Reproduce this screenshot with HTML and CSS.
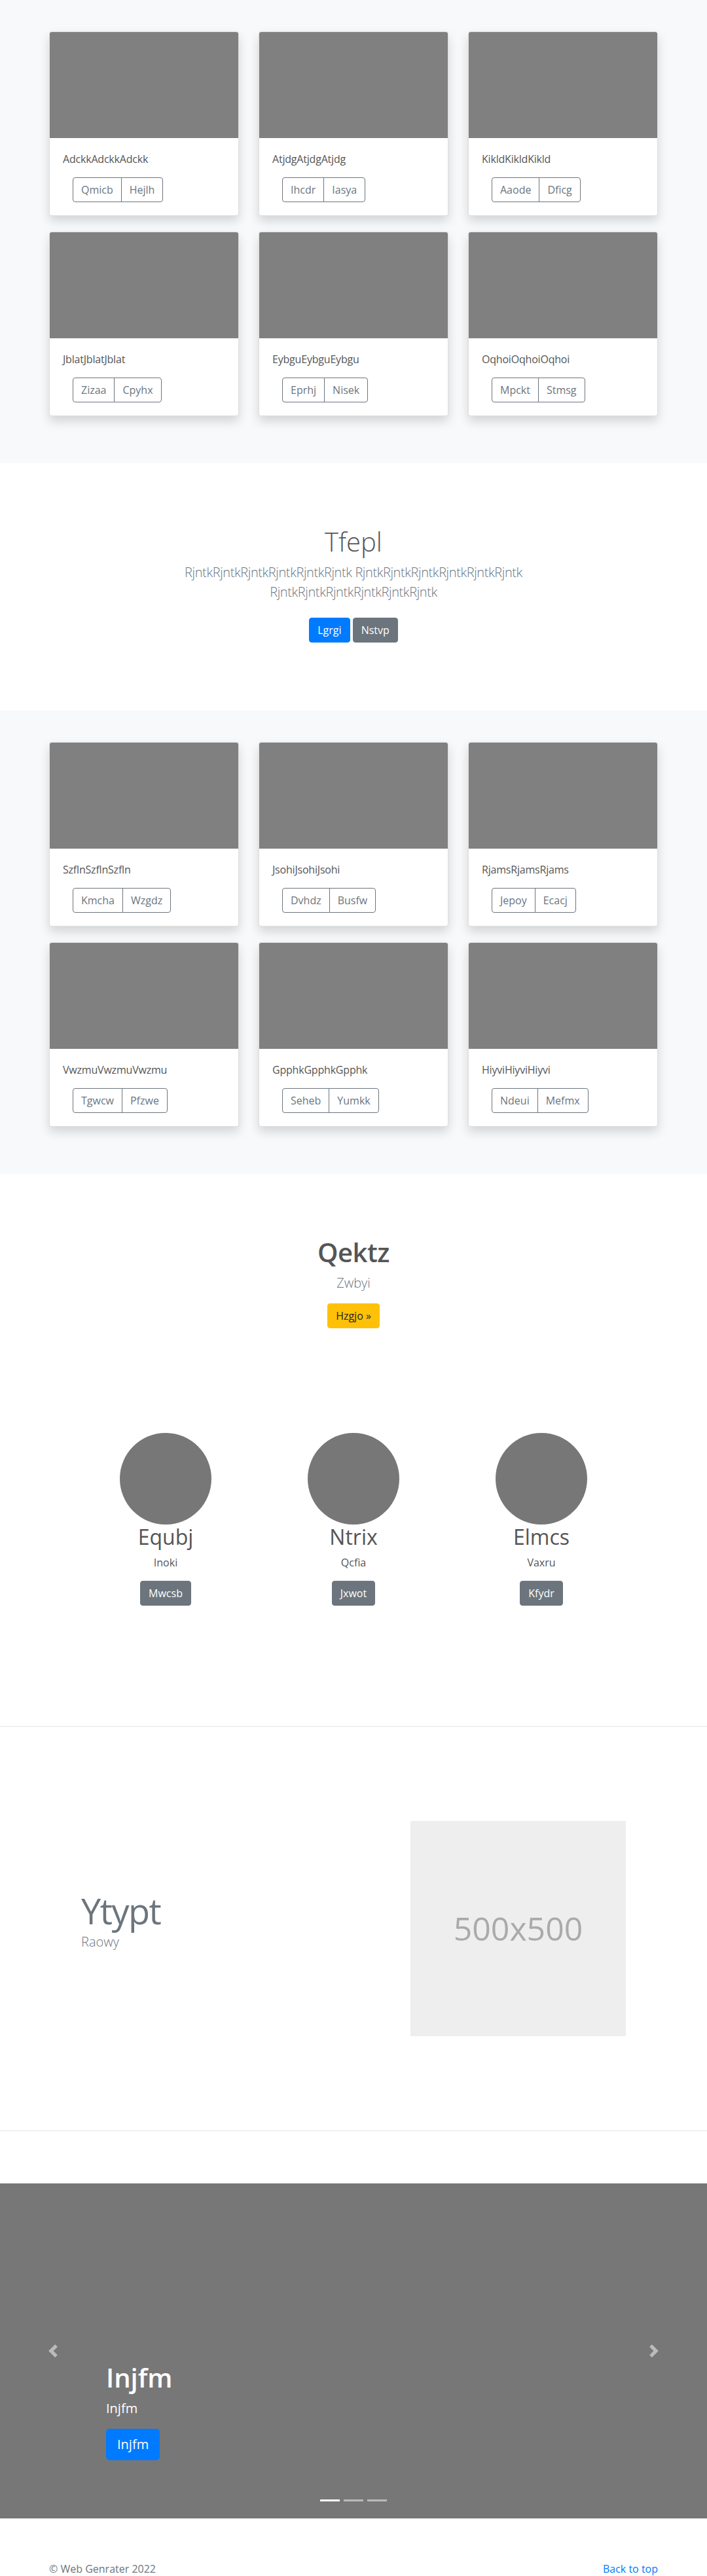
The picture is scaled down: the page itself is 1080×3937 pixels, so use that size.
FILE: index.html
```html
<!DOCTYPE html>
<html lang="en">
<head>
<meta charset="utf-8">
<title>Album</title>
<link rel="stylesheet" href="styles.css">
</head>
<body>

<section class="album">
  <div class="container grid">
    <div class="card"><div class="card-img"></div><div class="card-body"><p class="card-text">AdckkAdckkAdckk</p><div class="btn-group"><span class="btn-o">Qmicb</span><span class="btn-o">Hejlh</span></div></div></div>
    <div class="card"><div class="card-img"></div><div class="card-body"><p class="card-text">AtjdgAtjdgAtjdg</p><div class="btn-group"><span class="btn-o">Ihcdr</span><span class="btn-o">Iasya</span></div></div></div>
    <div class="card"><div class="card-img"></div><div class="card-body"><p class="card-text">KikldKikldKikld</p><div class="btn-group"><span class="btn-o">Aaode</span><span class="btn-o">Dficg</span></div></div></div>
    <div class="card"><div class="card-img"></div><div class="card-body"><p class="card-text">JblatJblatJblat</p><div class="btn-group"><span class="btn-o">Zizaa</span><span class="btn-o">Cpyhx</span></div></div></div>
    <div class="card"><div class="card-img"></div><div class="card-body"><p class="card-text">EybguEybguEybgu</p><div class="btn-group"><span class="btn-o">Eprhj</span><span class="btn-o">Nisek</span></div></div></div>
    <div class="card"><div class="card-img"></div><div class="card-body"><p class="card-text">OqhoiOqhoiOqhoi</p><div class="btn-group"><span class="btn-o">Mpckt</span><span class="btn-o">Stmsg</span></div></div></div>
  </div>
</section>

<section class="hero">
  <h1 class="hero-title">Tfepl</h1>
  <p class="lead hero-lead">RjntkRjntkRjntkRjntkRjntkRjntk RjntkRjntkRjntkRjntkRjntkRjntk RjntkRjntkRjntkRjntkRjntkRjntk</p>
  <p class="hero-actions"><span class="btn btn-primary">Lgrgi</span> <span class="btn btn-secondary">Nstvp</span></p>
</section>

<section class="album">
  <div class="container grid">
    <div class="card"><div class="card-img"></div><div class="card-body"><p class="card-text">SzflnSzflnSzfln</p><div class="btn-group"><span class="btn-o">Kmcha</span><span class="btn-o">Wzgdz</span></div></div></div>
    <div class="card"><div class="card-img"></div><div class="card-body"><p class="card-text">JsohiJsohiJsohi</p><div class="btn-group"><span class="btn-o">Dvhdz</span><span class="btn-o">Busfw</span></div></div></div>
    <div class="card"><div class="card-img"></div><div class="card-body"><p class="card-text">RjamsRjamsRjams</p><div class="btn-group"><span class="btn-o">Jepoy</span><span class="btn-o">Ecacj</span></div></div></div>
    <div class="card"><div class="card-img"></div><div class="card-body"><p class="card-text">VwzmuVwzmuVwzmu</p><div class="btn-group"><span class="btn-o">Tgwcw</span><span class="btn-o">Pfzwe</span></div></div></div>
    <div class="card"><div class="card-img"></div><div class="card-body"><p class="card-text">GpphkGpphkGpphk</p><div class="btn-group"><span class="btn-o">Seheb</span><span class="btn-o">Yumkk</span></div></div></div>
    <div class="card"><div class="card-img"></div><div class="card-body"><p class="card-text">HiyviHiyviHiyvi</p><div class="btn-group"><span class="btn-o">Ndeui</span><span class="btn-o">Mefmx</span></div></div></div>
  </div>
</section>

<section class="feature">
  <div class="feature-head">
    <h1 class="feature-title">Qektz</h1>
    <p class="feature-sub">Zwbyi</p>
    <span class="btn btn-warning">Hzgjo »</span>
  </div>
  <div class="team">
    <div class="member">
      <div class="avatar"></div>
      <h2 class="member-name">Equbj</h2>
      <p class="member-role">Inoki</p>
      <span class="btn btn-secondary">Mwcsb</span>
    </div>
    <div class="member">
      <div class="avatar"></div>
      <h2 class="member-name">Ntrix</h2>
      <p class="member-role">Qcfia</p>
      <span class="btn btn-secondary">Jxwot</span>
    </div>
    <div class="member">
      <div class="avatar"></div>
      <h2 class="member-name">Elmcs</h2>
      <p class="member-role">Vaxru</p>
      <span class="btn btn-secondary">Kfydr</span>
    </div>
  </div>
</section>

<section class="split">
  <div class="container split-row">
    <div class="split-text">
      <h1 class="split-title">Ytypt</h1>
      <p class="split-sub">Raowy</p>
    </div>
    <div class="placeholder">500x500</div>
  </div>
</section>

<section class="carousel">
  <div class="carousel-caption">
    <h1 class="caption-title">Injfm</h1>
    <p class="caption-text">Injfm</p>
    <span class="btn btn-primary btn-lg">Injfm</span>
  </div>
  <span class="carousel-control prev">
    <svg width="20" height="20" viewBox="0 0 8 8"><path fill="#fff" d="M5.25 0l-4 4 4 4 1.5-1.5L4.25 4l2.5-2.5L5.25 0z"/></svg>
  </span>
  <span class="carousel-control next">
    <svg width="20" height="20" viewBox="0 0 8 8"><path fill="#fff" d="M2.75 0l-1.5 1.5L3.75 4l-2.5 2.5L2.75 8l4-4-4-4z"/></svg>
  </span>
  <ol class="carousel-indicators">
    <li class="active"></li>
    <li></li>
    <li></li>
  </ol>
</section>

<footer class="footer">
  <div class="container footer-row">
    <p class="footer-copy">© Web Genrater 2022</p>
    <a class="footer-link" href="#">Back to top</a>
  </div>
</footer>

</body>
</html>
```

FILE: styles.css
```css
* { box-sizing: border-box; }

html, body {
  margin: 0;
  padding: 0;
}

body {
  font-family: "Open Sans", "Noto Sans", sans-serif;
  font-size: 16px;
  line-height: 1.5;
  color: #555;
  background: #fff;
}

h1, h2, p { margin: 0; }

.container {
  width: 960px;
  margin: 0 auto;
  padding: 0 15px;
}

/* ---------- buttons ---------- */
.btn {
  display: inline-block;
  padding: 6px 12px;
  font-size: 16px;
  line-height: 24px;
  border: 1px solid transparent;
  border-radius: 4px;
  color: #fff;
  vertical-align: middle;
}
.btn-primary { background: #007bff; border-color: #007bff; }
.btn-secondary { background: #6c757d; border-color: #6c757d; }
.btn-warning { background: #ffc107; border-color: #ffc107; color: #212529; }
.btn-lg {
  padding: 8px 16px;
  font-size: 20px;
  line-height: 30px;
  border-radius: 5px;
}

/* ---------- album ---------- */
.album {
  background: #f8f9fa;
  padding: 48px 0 72px;
}
.grid {
  display: grid;
  grid-template-columns: repeat(3, 290px);
  column-gap: 30px;
  row-gap: 24px;
}
.card {
  background: #fff;
  border: 1px solid rgba(0,0,0,.125);
  border-radius: 4px;
  box-shadow: 0 8px 16px rgba(0,0,0,.15);
  overflow: hidden;
}
.card-img {
  height: 162px;
  background: #808080;
}
.card-body {
  padding: 20px;
}
.card-text {
  margin-bottom: 16px;
  color: #555;
  letter-spacing: -0.2px;
}
.btn-group {
  display: inline-flex;
  margin-left: 15px;
}
.btn-o {
  display: inline-block;
  padding: 6px 12px;
  line-height: 24px;
  font-size: 16px;
  color: #6c757d;
  border: 1px solid #6c757d;
}
.btn-o:first-child { border-radius: 4px 0 0 4px; }
.btn-o + .btn-o { margin-left: -1px; border-radius: 0 4px 4px 0; }

/* ---------- hero ---------- */
.hero {
  padding: 96px 0;
  text-align: center;
  background: #fff;
}
.hero-title {
  font-size: 40px;
  font-weight: 300;
  line-height: 1.2;
  margin-bottom: 8px;
  color: #555;
}
.lead {
  font-size: 20px;
  font-weight: 300;
  line-height: 30px;
}
.hero-lead {
  max-width: 610px;
  margin: 0 auto 16px;
  color: #6c757d;
  letter-spacing: -0.4px;
}
.hero-actions .btn { margin: 8px 0; }

/* ---------- feature ---------- */
.feature {
  background: #fff;
  padding: 96px 0 184px;
  text-align: center;
}
.feature-title {
  font-size: 40px;
  font-weight: 600;
  line-height: 1.2;
  margin-bottom: 8px;
  color: #555;
  letter-spacing: -0.5px;
}
.feature-sub {
  font-size: 20px;
  font-weight: 300;
  line-height: 30px;
  color: #6c757d;
  margin-bottom: 16px;
}
.team {
  width: 861px;
  margin: 160px auto 0;
  display: flex;
}
.member {
  flex: 1;
  display: flex;
  flex-direction: column;
  align-items: center;
}
.avatar {
  width: 140px;
  height: 140px;
  border-radius: 50%;
  background: #777;
}
.member-name {
  font-size: 32px;
  font-weight: 400;
  line-height: 1.2;
  margin-bottom: 8px;
  color: #555;
}
.member-role {
  margin-bottom: 16px;
  color: #555;
}

/* ---------- split ---------- */
.split {
  border-top: 1px solid #e6e6e6;
  border-bottom: 1px solid #e6e6e6;
  padding: 144px 0;
}
.split-row {
  display: flex;
  align-items: center;
  padding-left: 64px;
  padding-right: 64px;
}
.split-text {
  flex: 1;
}
.split-title {
  font-size: 54px;
  font-weight: 400;
  line-height: 1.2;
  color: #6c757d;
  letter-spacing: -1.5px;
}
.split-sub {
  font-size: 20px;
  font-weight: 300;
  line-height: 30px;
  color: #6c757d;
  margin-bottom: 24px;
}
.placeholder {
  width: 329px;
  height: 329px;
  background: #eee;
  color: #aaa;
  font-size: 50px;
  display: flex;
  align-items: center;
  justify-content: center;
}

/* ---------- carousel ---------- */
.carousel {
  position: relative;
  height: 512px;
  margin-top: 80px;
  margin-bottom: 16px;
  background: #777;
  overflow: hidden;
}
.carousel-caption {
  position: absolute;
  left: 15%;
  right: 15%;
  bottom: 89px;
  color: #fff;
  text-align: left;
}
.caption-title {
  font-size: 40px;
  font-weight: 600;
  line-height: 48px;
  margin-bottom: 8px;
}
.caption-text {
  font-size: 20px;
  line-height: 30px;
  margin-bottom: 16px;
}
.carousel-control {
  position: absolute;
  top: 0;
  bottom: 0;
  width: 15%;
  display: flex;
  align-items: center;
  justify-content: center;
  opacity: .5;
}
.carousel-control.prev { left: 0; }
.carousel-control.next { right: 0; }
.carousel-control svg { display: block; }
.carousel-indicators {
  position: absolute;
  left: 0;
  right: 0;
  bottom: 0;
  margin: 0 0 16px;
  padding: 0;
  list-style: none;
  display: flex;
  justify-content: center;
}
.carousel-indicators li {
  width: 30px;
  height: 3px;
  margin: 10px 3px;
  background: #fff;
  opacity: .5;
}
.carousel-indicators li.active { opacity: 1; }

/* ---------- footer ---------- */
.footer {
  padding: 49px 0 48px;
}
.footer-row {
  display: flex;
  justify-content: space-between;
  align-items: flex-start;
}
.footer-copy {
  color: #6c757d;
  margin-bottom: 4px;
}
.footer-link {
  color: #007bff;
  text-decoration: none;
}
```
